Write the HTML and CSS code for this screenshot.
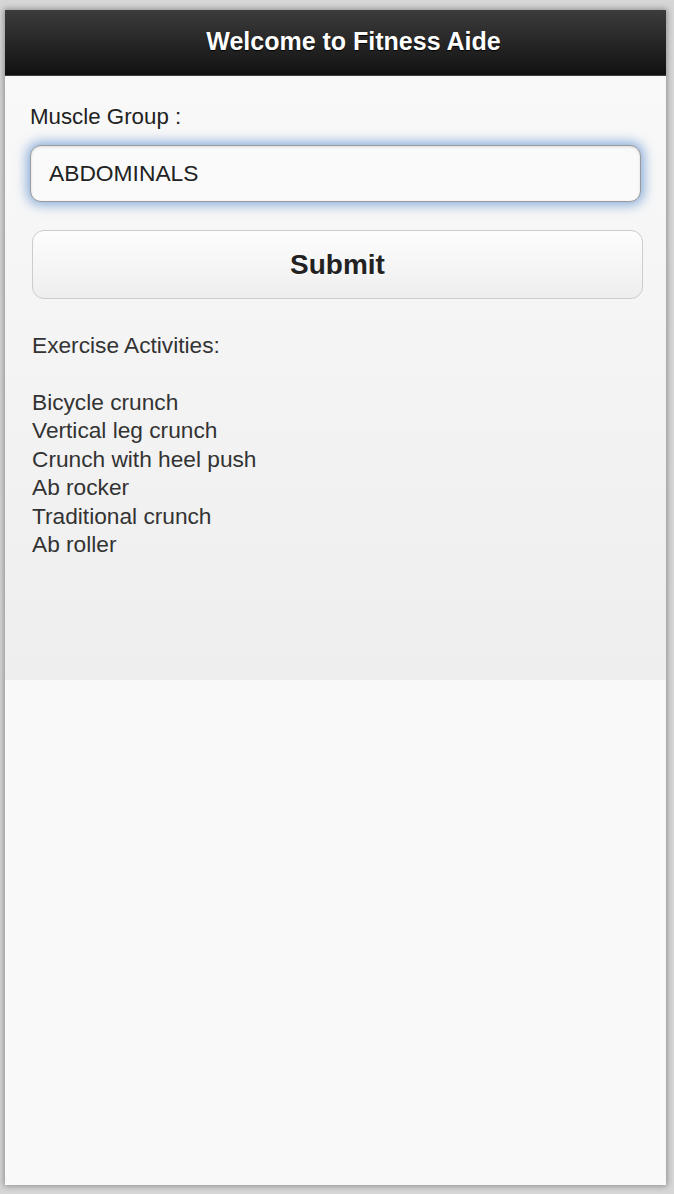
FILE: index.html
```html
<!DOCTYPE html>
<html>
<head>
<meta charset="utf-8">
<title>Fitness Aide</title>
<link rel="stylesheet" href="styles.css">
</head>
<body>
<div class="window">
  <header class="header"><h1>Welcome to Fitness Aide</h1></header>
  <main class="content">
    <label class="label" for="muscle">Muscle Group :</label>
    <div class="input" id="muscle">ABDOMINALS</div>
    <div class="button">Submit</div>
    <div class="results">
      <p class="results-title">Exercise Activities:</p>
      <ul class="list">
        <li>Bicycle crunch</li>
        <li>Vertical leg crunch</li>
        <li>Crunch with heel push</li>
        <li>Ab rocker</li>
        <li>Traditional crunch</li>
        <li>Ab roller</li>
      </ul>
    </div>
  </main>
</div>
</body>
</html>
```
FILE: styles.css
```css
html, body {
  margin: 0;
  padding: 0;
}
body {
  background: #d6d6d6;
  font-family: "Liberation Sans", Arial, Helvetica, sans-serif;
  width: 674px;
  height: 1194px;
  overflow: hidden;
}
.window {
  margin: 10px 0 0 5px;
  width: 661px;
  height: 1175px;
  background: #f9f9f9;
  box-shadow: 0 0 6px 1px rgba(0,0,0,0.35);
  display: flex;
  flex-direction: column;
}
.header {
  height: 65px;
  box-sizing: content-box;
  padding-left: 36px;
  border-bottom: 1px solid #3e3e3e;
  background: linear-gradient(#3c3c3c, #111111);
  display: flex;
  align-items: center;
  justify-content: center;
}
.header h1 {
  margin: 0 0 2px 0;
  color: #fff;
  font-size: 25px;
  font-weight: bold;
  letter-spacing: 0;
  text-shadow: 0 1px 1px #000;
}
.content {
  height: 604px;
  box-sizing: border-box;
  padding: 28px 25px 0 25px;
  background: linear-gradient(#f9f9f9, #eeeeee);
  color: #222;
  display: flex;
  flex-direction: column;
}
.label {
  font-size: 22.3px;
  color: #222;
  line-height: 26px;
}
.input {
  margin-top: 15px;
  height: 57px;
  box-sizing: border-box;
  border: 1px solid #9a9a9a;
  border-radius: 11px;
  background: #fafafa;
  box-shadow: 0 0 12px 3px rgba(90,140,205,0.7), inset 0 1px 3px rgba(0,0,0,0.12);
  padding: 0 18px;
  display: flex;
  align-items: center;
  font-size: 22.8px;
  color: #222;
}
.button {
  margin: 28px -2px 0 2px;
  height: 69px;
  box-sizing: border-box;
  border: 1px solid #cccccc;
  border-radius: 12px;
  background: linear-gradient(#fdfdfd, #eeeeee);
  display: flex;
  align-items: center;
  justify-content: center;
  font-size: 28px;
  font-weight: bold;
  color: #222;
  text-shadow: 0 1px 0 #fff;
}
.results {
  margin-left: 2px;
  font-size: 22.7px;
  line-height: 28.5px;
  color: #333;
}
.results-title {
  margin: 32px 0 28px 0;
}
.list {
  list-style: none;
  margin: 0;
  padding: 0;
}
```
